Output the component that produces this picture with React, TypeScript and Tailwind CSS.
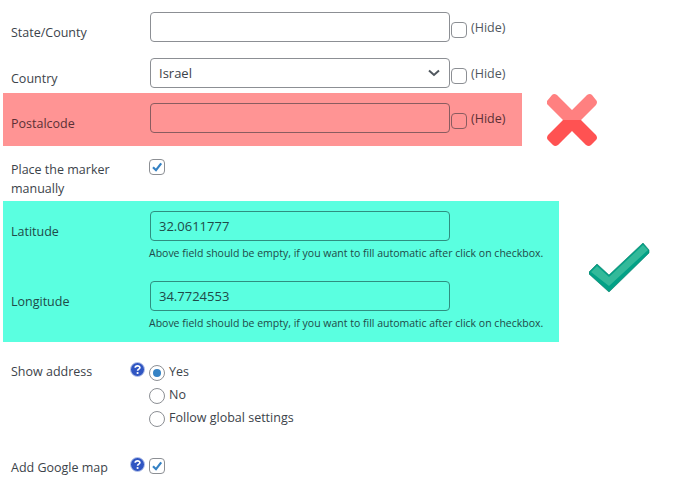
import React from "react";

const font = { fontFamily: '"Open Sans", "Noto Sans", sans-serif' };

function Check() {
  return (
    <span className="flex h-4 w-4 shrink-0 items-center justify-center rounded-[4px] border border-[#8c8f94] bg-white">
      <svg width="14" height="14" viewBox="0 0 14 14">
        <path d="M3 7.2 L6 10.2 L11.2 3.4" fill="none" stroke="#3582c4" strokeWidth="2.2" />
      </svg>
    </span>
  );
}

function Radio({ on, label }: { on?: boolean; label: string }) {
  return (
    <div className="flex h-[23px] items-center gap-1">
      <span className="flex h-4 w-4 items-center justify-center rounded-full border border-[#8c8f94] bg-white">
        {on && <span className="h-2 w-2 rounded-full bg-[#3582c4]" />}
      </span>
      <span className="-mt-[1px] text-[12.5px] text-[#3c434a]">{label}</span>
    </div>
  );
}

function Help() {
  return (
    <svg width="15" height="15" viewBox="0 0 15 15" className="shrink-0">
      <circle cx="7.5" cy="7.5" r="7" fill="#2f55c2" stroke="#b9c6ea" strokeWidth="1" />
      <path d="M5.2 5.8 C5.3 3.2 10 3.2 9.9 5.8 C9.8 7.3 7.6 7 7.6 8.8" fill="none" stroke="#fff" strokeWidth="1.7" />
      <circle cx="7.6" cy="11" r="1.1" fill="#fff" />
    </svg>
  );
}

function Hide({ border, text }: { border: string; text: string }) {
  return (
    <div className="ml-px mt-[6px] flex items-start gap-1 self-start">
      <span className={`mt-1 h-4 w-4 rounded-[4px] border ${border}`} />
      <span className={`text-[12.5px] leading-5 ${text}`}>(Hide)</span>
    </div>
  );
}

function Label({ children, className = "" }: { children: React.ReactNode; className?: string }) {
  return <div className={`w-[139px] shrink-0 text-[12.5px] leading-5 ${className}`}>{children}</div>;
}

function Coord({ label, value }: { label: string; value: string }) {
  return (
    <div className="flex h-[70px]">
      <Label className="mt-[11px]">{label}</Label>
      <div>
        <div className="flex h-[30px] w-[300px] items-center rounded-[4px] border border-[#2f8f80] pl-2 pt-[2px] text-[13px]">
          {value}
        </div>
        <p className="-ml-px mt-1 text-[10.5px] leading-4">
          Above field should be empty, if you want to fill automatic after click on checkbox.
        </p>
      </div>
    </div>
  );
}

export default function App() {
  return (
    <div style={font} className="h-[489px] w-[673px] overflow-hidden bg-white pl-[3px] text-[#3c434a]">
      <div className="flex h-[42px] pl-2 pt-3">
        <Label className="mt-[11px]">State/County</Label>
        <div className="h-[30px] w-[300px] rounded-[4px] border border-[#8c8f94] bg-white" />
        <Hide border="border-[#8c8f94] bg-white" text="text-[#50575e]" />
      </div>

      <div className="flex h-[46px] pl-2 pt-4">
        <Label className="mt-[11px]">Country</Label>
        <div className="flex h-[30px] w-[300px] items-center justify-between rounded-[4px] border border-[#8c8f94] bg-white pl-2 pr-[9px] text-[13px]">
          <span className="pt-[2px]">Israel</span>
          <svg width="12" height="8" viewBox="0 0 12 8">
            <path d="M1 1.5 L6 6 L11 1.5" fill="none" stroke="#50575e" strokeWidth="2" />
          </svg>
        </div>
        <Hide border="border-[#8c8f94] bg-white" text="text-[#50575e]" />
      </div>

      <div className="mt-[5px] flex items-center">
        <div className="flex h-[53px] w-[519px] bg-[#ff9494] pl-2 pt-[10px] text-[#5b3035]">
          <Label className="mt-[11px]">Postalcode</Label>
          <div className="h-[30px] w-[300px] rounded-[4px] border border-[#8a5c60]" />
          <Hide border="border-[#8a5c60]" text="text-[#5b3035]" />
        </div>
        <svg width="50" height="52" viewBox="0 0 50 52" className="ml-[25px]">
          <path d="M0 7 L5 1 Q7 -1 10 1 L25 16 L40 1 Q43 -1 45 1 L49 6 Q51 8 49 11 L34 26 L16 26 L1 11 Q-1 9 0 7 Z" fill="#ff8080" />
          <path d="M16 26 L34 26 L49 41 Q51 44 49 46 L44 51 Q42 53 39 51 L25 37 L11 51 Q8 53 6 51 L1 46 Q-1 44 1 41 Z" fill="#ff5252" />
        </svg>
      </div>

      <div className="flex h-[55px] pl-2 pt-[13px]">
        <Label className="mt-[1px] leading-[19px]">
          Place the marker
          <br />
          manually
        </Label>
        <div className="-ml-px">
          <Check />
        </div>
      </div>

      <div className="flex items-start">
        <div className="h-[141px] w-[556px] bg-[#5affe0] pl-2 pt-[10px] text-[#1f4a48]">
          <Coord label="Latitude" value="32.0611777" />
          <Coord label="Longitude" value="34.7724553" />
        </div>
        <svg width="61" height="50" viewBox="0 0 61 50" className="ml-[30px] mt-[42px]">
          <path d="M0 29 L8 21 L20 32 L54 0 L60 7 L60 10 L20 49 L0 31 Z" fill="#02a186" stroke="#067a67" strokeWidth="0.6" />
          <path d="M2 29 L8 23 L20 34 L54 2 L59 7 L20 43 Z" fill="#33b99a" />
        </svg>
      </div>

      <div className="flex pl-2 pt-[20px]">
        <div className="flex w-[138px] shrink-0 justify-between pr-[4px]">
          <span className="text-[12.5px] leading-5">Show address</span>
          <Help />
        </div>
        <div className="-mt-[1px]">
          <Radio on label="Yes" />
          <Radio label="No" />
          <Radio label="Follow global settings" />
        </div>
      </div>

      <div className="flex pl-2 pt-[26px]">
        <div className="flex w-[138px] shrink-0 justify-between pr-[4px]">
          <span className="mt-[2px] text-[12.5px] leading-5">Add Google map</span>
          <div className="mt-px"><Help /></div>
        </div>
        <div className="mt-[2px]"><Check /></div>
      </div>
    </div>
  );
}
